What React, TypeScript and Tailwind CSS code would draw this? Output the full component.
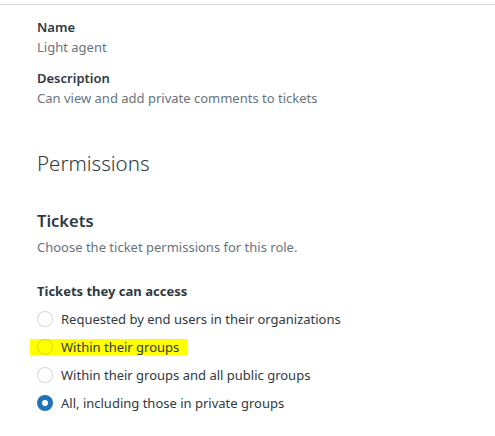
import React from "react";

const font = { fontFamily: '"Noto Sans", "Open Sans", sans-serif' };

function Radio({ checked, highlight }: { checked?: boolean; highlight?: boolean }) {
  if (checked) {
    return (
      <span className="flex h-[16px] w-[16px] shrink-0 items-center justify-center rounded-full bg-[#1f73b7]">
        <span className="h-[6px] w-[6px] rounded-full bg-white" />
      </span>
    );
  }
  return (
    <span
      className={
        "h-[16px] w-[16px] shrink-0 rounded-full border border-black/15 " +
        (highlight ? "bg-transparent" : "bg-white")
      }
    />
  );
}

function Row({ label, checked, highlight }: { label: string; checked?: boolean; highlight?: boolean }) {
  return (
    <div className="flex h-[28px] items-center">
      <span
        className={
          "-ml-[7px] flex h-[16px] items-center gap-[8px] pl-[7px] " +
          (highlight ? "bg-[#ffff00] pr-[9px]" : "")
        }
      >
        <Radio checked={checked} highlight={highlight} />
        <span className="text-[13px] leading-[20px] text-[#2f3941]">{label}</span>
      </span>
    </div>
  );
}

export default function App() {
  return (
    <div className="min-h-[436px] w-[495px] bg-white" style={font}>
      <div className="h-[4px]" />
      <div className="border-t border-[#d8dcde] pl-[37px] pt-[12px]">
        <div className="text-[13px] font-semibold leading-[20px] text-[#2f3941]">Name</div>
        <div className="text-[13px] leading-[20px] text-[#68737d]">Light agent</div>
        <div className="mt-[11px] text-[13px] font-semibold leading-[20px] text-[#2f3941]">Description</div>
        <div className="text-[13px] leading-[20px] text-[#68737d]">Can view and add private comments to tickets</div>

        <h1 className="mt-[39px] text-[20.5px] font-light leading-[32px] text-[#2f3941]">Permissions</h1>

        <h2 className="mt-[30px] text-[16.5px] font-semibold leading-[24px] text-[#2f3941]">Tickets</h2>
        <p className="mt-[4px] text-[13px] leading-[20px] text-[#68737d]">Choose the ticket permissions for this role.</p>

        <div className="mt-[24px] text-[13px] font-bold leading-[20px] text-[#2f3941]">Tickets they can access</div>
        <div className="mt-[4px]">
          <Row label="Requested by end users in their organizations" />
          <Row label="Within their groups" highlight />
          <Row label="Within their groups and all public groups" />
          <Row label="All, including those in private groups" checked />
        </div>
      </div>
    </div>
  );
}
